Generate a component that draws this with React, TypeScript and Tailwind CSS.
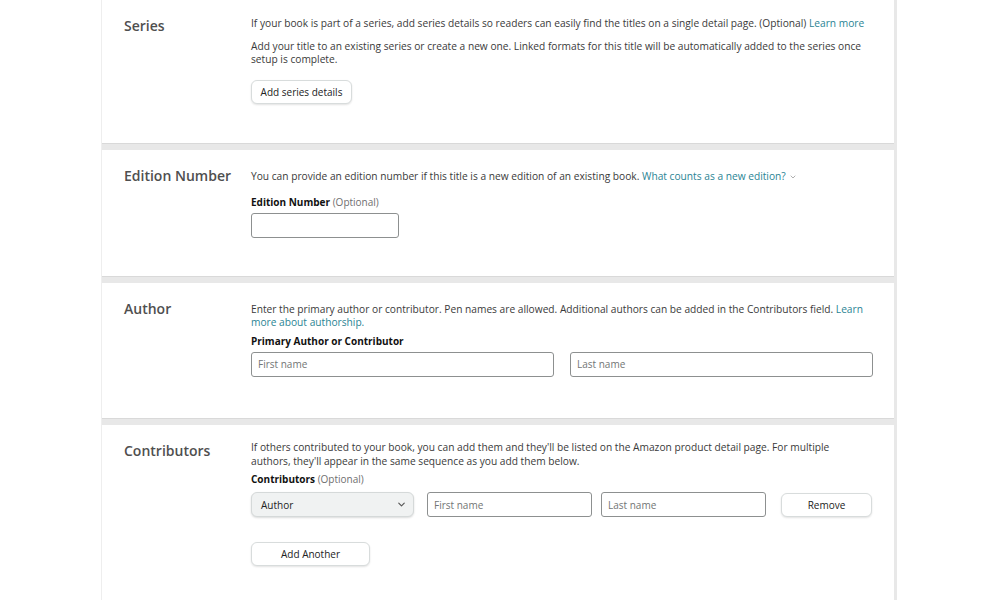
import { ChevronDown } from "lucide-react";

const FONT = { fontFamily: '"Open Sans", "Liberation Sans", sans-serif' };

function Panel({ title, height, children }: { title: string; height: string; children: React.ReactNode }) {
  return (
    <div className={`flex shrink-0 bg-white border-b border-[#d9d9d9] ${height}`}>
      <div className="w-[149px] shrink-0 pl-[22px] pt-[16px]">
        <h2 className="text-[14px] leading-[20px] font-semibold text-[#4f4f4f]">{title}</h2>
      </div>
      <div className="w-[622px] shrink-0">{children}</div>
    </div>
  );
}

function TextInput({ placeholder, width }: { placeholder?: string; width: string }) {
  return (
    <div
      className={`${width} h-[25px] rounded-[3px] border border-[#8d9090] bg-white px-[6px] flex items-center text-[10px] text-[#727575]`}
    >
      {placeholder}
    </div>
  );
}

function Button({ label, width }: { label: string; width: string }) {
  return (
    <div
      className={`${width} h-[24px] rounded-[6px] border border-[#d8dcdc] bg-white flex items-center justify-center text-[10px] text-[#222] shadow-[0_1px_2px_rgba(15,17,17,0.12)]`}
    >
      {label}
    </div>
  );
}

export default function App() {
  return (
    <div className="w-[1000px] h-[600px] bg-white overflow-hidden" style={FONT}>
      <div className="ml-[101px] w-[796px] bg-[#e8e8e8] pr-[3px] border-l border-[#eeeeee] flex flex-col gap-[6px]">
        {/* Series */}
        <Panel title="Series" height="h-[144px]">
          <div className="pt-[17px] text-[10.2px] leading-[13px] text-[#3a3a3a]">
            <p>
              If your book is part of a series, add series details so readers can easily find the titles on a single detail page. (Optional){" "}
              <span className="text-[#2a8494]">Learn more</span>
            </p>
            <p className="mt-[10px]">
              Add your title to an existing series or create a new one. Linked formats for this title will be automatically added to the series once setup is complete.
            </p>
            <div className="mt-[14px]">
              <Button label="Add series details" width="w-[101px]" />
            </div>
          </div>
        </Panel>

        {/* Edition Number */}
        <Panel title="Edition Number" height="h-[127px]">
          <div className="pt-[20px] text-[10.2px] leading-[13px] text-[#3a3a3a]">
            <p>
              You can provide an edition number if this title is a new edition of an existing book.{" "}
              <span className="text-[#2a8494]">
                What counts as a new edition?
                <ChevronDown className="inline w-[8px] h-[8px] ml-[3px] text-[#888]" strokeWidth={2} />
              </span>
            </p>
            <p className="mt-[13px] text-[10px]">
              <span className="font-bold text-[#111]">Edition Number</span>{" "}
              <span className="text-[#6f6f6f]">(Optional)</span>
            </p>
            <div className="mt-[4px]">
              <TextInput width="w-[148px]" />
            </div>
          </div>
        </Panel>

        {/* Author */}
        <Panel title="Author" height="h-[136px]">
          <div className="pt-[20px] text-[10.2px] leading-[13px] text-[#3a3a3a]">
            <p>
              Enter the primary author or contributor. Pen names are allowed. Additional authors can be added in the Contributors field.{" "}
              <span className="text-[#2a8494]">Learn more about authorship.</span>
            </p>
            <p className="mt-[6px] text-[10px] font-bold text-[#111]">Primary Author or Contributor</p>
            <div className="mt-[4px] flex gap-[16px]">
              <TextInput placeholder="First name" width="w-[303px]" />
              <TextInput placeholder="Last name" width="w-[303px]" />
            </div>
          </div>
        </Panel>

        {/* Contributors */}
        <Panel title="Contributors" height="h-[220px]">
          <div className="pt-[15px] text-[10.2px] leading-[14px] text-[#3a3a3a]">
            <p className="w-[600px]">
              If others contributed to your book, you can add them and they'll be listed on the Amazon product detail page. For multiple authors, they'll appear in the same sequence as you add them below.
            </p>
            <p className="mt-[5px] leading-[13px] text-[10px]">
              <span className="font-bold text-[#111]">Contributors</span>{" "}
              <span className="text-[#6f6f6f]">(Optional)</span>
            </p>
            <div className="mt-[6px] flex items-center">
              <div className="w-[163px] h-[25px] rounded-[6px] border border-[#d5d9d9] bg-[#f0f2f2] shadow-[0_1px_2px_rgba(15,17,17,0.15)] flex items-center justify-between pl-[9px] pr-[6px] text-[10px] text-[#222]">
                <span>Author</span>
                <ChevronDown className="w-[11px] h-[11px] text-[#555]" strokeWidth={2.5} />
              </div>
              <div className="ml-[13px]">
                <TextInput placeholder="First name" width="w-[165px]" />
              </div>
              <div className="ml-[9px]">
                <TextInput placeholder="Last name" width="w-[165px]" />
              </div>
              <div className="ml-[15px]">
                <Button label="Remove" width="w-[91px]" />
              </div>
            </div>
            <div className="mt-[25px]">
              <Button label="Add Another" width="w-[119px]" />
            </div>
          </div>
        </Panel>
      </div>
    </div>
  );
}
